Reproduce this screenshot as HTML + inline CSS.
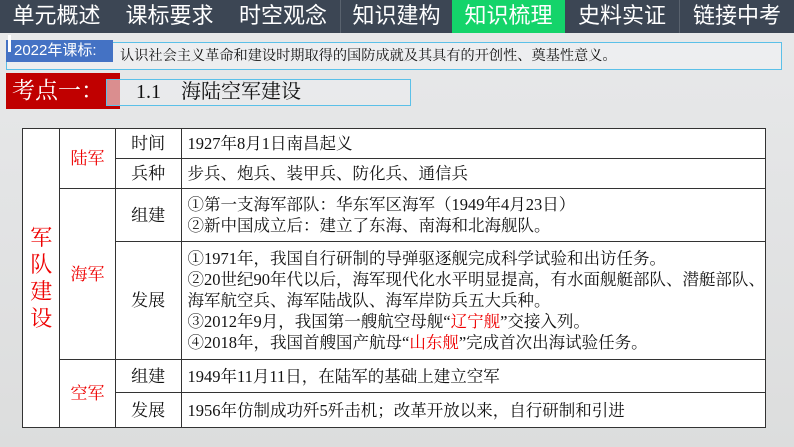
<!DOCTYPE html><html style="background:#e4e5e6"><head><meta charset="utf-8"><style>
html,body{margin:0;width:794px;height:447px;overflow:hidden}
body{background:linear-gradient(180deg,#e8e9ea 0%,#e2e3e4 50%,#dcdddd 100%);font-family:"Liberation Serif","Noto Serif CJK SC",serif;position:relative}
.tab{position:absolute;top:0;height:33px;background:#3c4654;color:#fff;font-family:"Liberation Sans","Noto Sans CJK SC",sans-serif;font-size:22px;line-height:32px;text-align:center;border-right:1px solid #59626e}
.a{position:absolute}
table{position:absolute;left:22px;top:128px;width:744px;border-collapse:collapse;background:#fff;font-size:16.5px}
td{border:1px solid #333;padding:0 0 0 6px;color:#111;line-height:21px;white-space:nowrap}
td.c{text-align:center;padding:0}
.r{color:#e00}
</style></head><body>
<div class="tab" style="left:0;width:113px">单元概述</div>
<div class="tab" style="left:113px;width:113px">课标要求</div>
<div class="tab" style="left:226px;width:114px">时空观念</div>
<div class="tab" style="left:341px;width:111px">知识建构</div>
<div class="tab" style="left:452px;width:113px;background:#14d46a">知识梳理</div>
<div class="tab" style="left:565px;width:114px">史料实证</div>
<div class="tab" style="left:680px;width:114px;border:none">链接中考</div>

<div class="a" style="left:6px;top:42px;width:774px;height:26px;border:1px solid #5bc0e8;background:rgba(240,241,242,.7)"></div>
<div class="a" style="left:6px;top:40px;width:107px;height:22px;background:#4472c4;color:#fff;font-family:'Liberation Sans','Noto Sans CJK SC',sans-serif;font-size:15px;line-height:22px;padding-left:8px;box-sizing:border-box">2022年课标:</div>
<div class="a" style="left:8px;top:35px;width:3px;height:17px;background:#fff"></div>
<div class="a" style="left:120px;top:45px;font-size:14.2px;color:#111;white-space:nowrap">认识社会主义革命和建设时期取得的国防成就及其具有的开创性、奠基性意义。</div>

<div class="a" style="left:6px;top:73px;width:114px;height:36px;background:#c00000;color:#fff;font-size:23px;line-height:36px;padding-left:6px;box-sizing:border-box">考点一：</div>
<div class="a" style="left:106px;top:79px;width:305px;height:27px;border:1px solid #5bc0e8;box-sizing:border-box;background:rgba(235,237,238,.6)"></div>
<div class="a" style="left:136px;top:79px;font-size:20px;line-height:27px;color:#111;white-space:nowrap">1.1　海陆空军建设</div>

<table>
<colgroup><col style="width:38px"><col style="width:56px"><col style="width:67px"><col></colgroup>
<tr style="height:30px"><td class="c r" rowspan="8" style="font-size:22px;line-height:27px">军<br>队<br>建<br>设</td><td class="c r" rowspan="2" style="font-size:17px">陆军</td><td class="c" style="font-size:17px">时间</td><td>1927年8月1日南昌起义</td></tr>
<tr style="height:30px"><td class="c" style="font-size:17px">兵种</td><td>步兵、炮兵、装甲兵、防化兵、通信兵</td></tr>
<tr style="height:53px"><td class="c r" rowspan="2" style="font-size:17px">海军</td><td class="c" style="font-size:17px">组建</td><td>①第一支海军部队：华东军区海军（1949年4月23日）<br>②新中国成立后：建立了东海、南海和北海舰队。</td></tr>
<tr style="height:118px"><td class="c" style="font-size:17px">发展</td><td>①1971年，我国自行研制的导弹驱逐舰完成科学试验和出访任务。<br>②20世纪90年代以后，海军现代化水平明显提高，有水面舰艇部队、潜艇部队、<br>海军航空兵、海军陆战队、海军岸防兵五大兵种。<br>③2012年9月，我国第一艘航空母舰“<span class="r">辽宁舰</span>”交接入列。<br>④2018年，我国首艘国产航母“<span class="r">山东舰</span>”完成首次出海试验任务。</td></tr>
<tr style="height:33px"><td class="c r" rowspan="2" style="font-size:17px">空军</td><td class="c" style="font-size:17px">组建</td><td>1949年11月11日，在陆军的基础上建立空军</td></tr>
<tr style="height:35px"><td class="c" style="font-size:17px">发展</td><td>1956年仿制成功歼5歼击机；改革开放以来，自行研制和引进</td></tr>
</table>
</body></html>
